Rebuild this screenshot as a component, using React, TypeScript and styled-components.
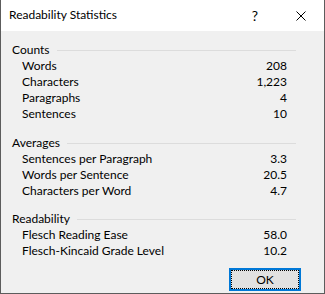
import React from "react";
import styled, { createGlobalStyle } from "styled-components";

const GlobalStyle = createGlobalStyle`
  html, body {
    margin: 0;
    padding: 0;
    background: #ffffff;
  }
  body {
    font-family: Lato, "Noto Sans", "Liberation Sans", sans-serif;
    font-size: 12px;
    color: #000000;
  }
`;

const Window = styled.div`
  width: 325px;
  height: 294px;
  box-sizing: border-box;
  border: 1px solid #5c5c5c;
  border-top: none;
  background: #f0f0f0;
  display: flex;
  flex-direction: column;
`;

const TitleBar = styled.div`
  height: 31px;
  background: #ffffff;
  display: flex;
  align-items: center;
  padding-left: 8px;
  flex-shrink: 0;
`;

const Title = styled.span`
  flex: 1;
  font-size: 12px;
  line-height: 16px;
  margin-top: -1px;
`;

const CaptionButton = styled.div`
  width: 46px;
  height: 31px;
  display: flex;
  align-items: center;
  justify-content: center;
  font-size: 14px;
`;

const Content = styled.div`
  padding: 11px 28px 0 11px;
`;

const Section = styled.div<{ $gap: number }>`
  margin-top: ${(p) => p.$gap}px;
`;

const Header = styled.div`
  display: flex;
  align-items: center;
  line-height: 16px;
  height: 16px;
  &::after {
    content: "";
    flex: 1;
    height: 1px;
    background: #dcdcdc;
    margin-left: 7px;
  }
`;

const Row = styled.div`
  display: flex;
  justify-content: space-between;
  line-height: 16px;
  height: 16px;
  padding: 0 9px 0 10px;
`;

const Footer = styled.div`
  display: flex;
  justify-content: flex-end;
  padding: 9px 23px 0 0;
`;

const OkButton = styled.button`
  width: 72px;
  height: 23px;
  box-sizing: border-box;
  border: 2px solid #0078d7;
  background: #e1e1e1;
  padding: 0;
  font-family: inherit;
  font-size: 12px;
  color: #000;
  display: flex;
  span {
    flex: 1;
    border: 1px dotted #000;
    display: flex;
    align-items: center;
    justify-content: center;
    line-height: 16px;
  }
`;

type Stat = { label: string; value: string };

const sections: { title: string; gap: number; rows: Stat[] }[] = [
  {
    title: "Counts",
    gap: 0,
    rows: [
      { label: "Words", value: "208" },
      { label: "Characters", value: "1,223" },
      { label: "Paragraphs", value: "4" },
      { label: "Sentences", value: "10" },
    ],
  },
  {
    title: "Averages",
    gap: 13,
    rows: [
      { label: "Sentences per Paragraph", value: "3.3" },
      { label: "Words per Sentence", value: "20.5" },
      { label: "Characters per Word", value: "4.7" },
    ],
  },
  {
    title: "Readability",
    gap: 12,
    rows: [
      { label: "Flesch Reading Ease", value: "58.0" },
      { label: "Flesch-Kincaid Grade Level", value: "10.2" },
    ],
  },
];

const App: React.FC = () => (
  <>
    <GlobalStyle />
    <Window>
      <TitleBar>
        <Title>Readability Statistics</Title>
        <CaptionButton>?</CaptionButton>
        <CaptionButton>
          <svg width="10" height="10" viewBox="0 0 10 10">
            <path d="M0.5 0.5 L9.5 9.5 M9.5 0.5 L0.5 9.5" stroke="#000" strokeWidth="1" />
          </svg>
        </CaptionButton>
      </TitleBar>
      <Content>
        {sections.map((s) => (
          <Section key={s.title} $gap={s.gap}>
            <Header>{s.title}</Header>
            {s.rows.map((r) => (
              <Row key={r.label}>
                <span>{r.label}</span>
                <span>{r.value}</span>
              </Row>
            ))}
          </Section>
        ))}
      </Content>
      <Footer>
        <OkButton>
          <span>OK</span>
        </OkButton>
      </Footer>
    </Window>
  </>
);

export default App;
